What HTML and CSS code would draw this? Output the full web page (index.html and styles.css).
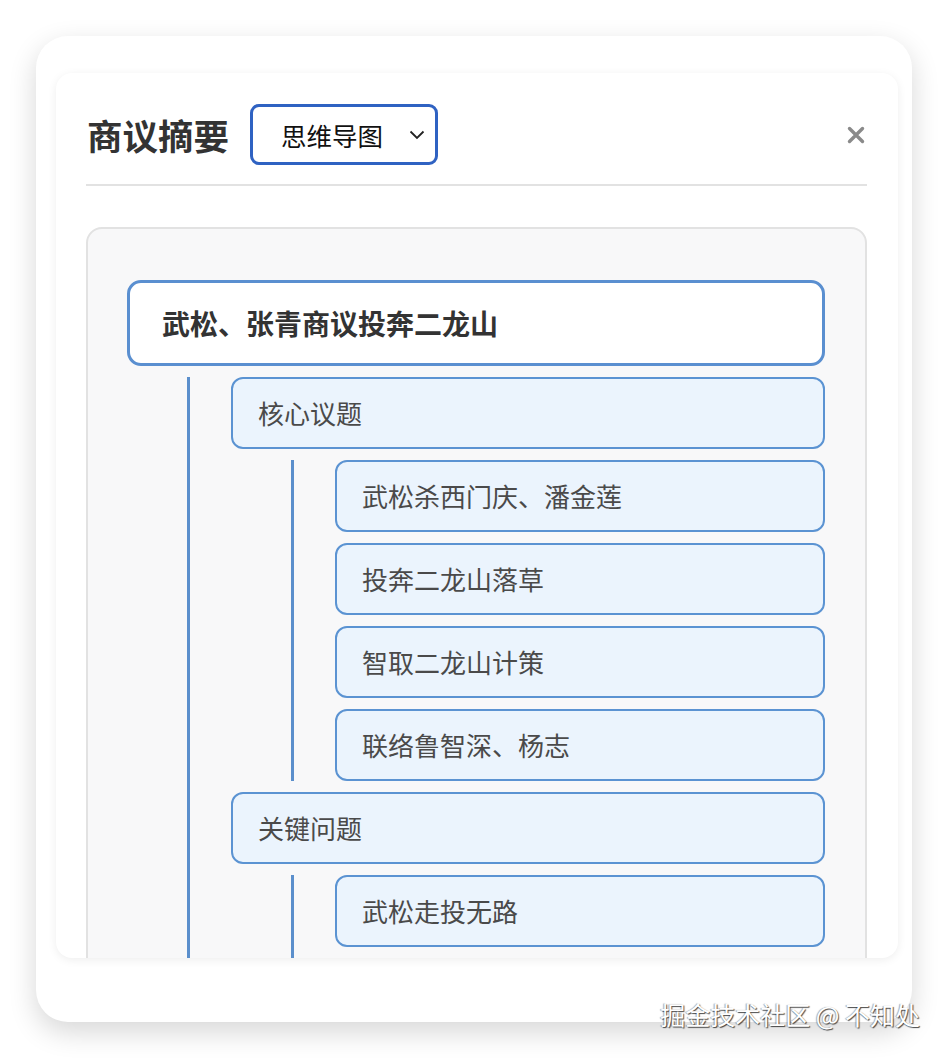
FILE: index.html
```html
<!DOCTYPE html>
<html lang="zh-CN">

<head>
    <meta charset="UTF-8">
    <link rel="stylesheet" href="styles.css">
</head>

<body>
    <div class="frame">
        <div class="panel">
            <div class="panel-header">
                <h2 class="panel-title">商议摘要</h2>
                <div class="view-select">
                    <span>思维导图</span>
                    <svg width="16" height="10" viewBox="0 0 16 10">
                        <path d="M1.5 1.5 L8 8 L14.5 1.5" fill="none" stroke="#222" stroke-width="1.8" />
                    </svg>
                </div>
                <div class="close-btn">
                    <svg width="18" height="18" viewBox="0 0 18 18">
                        <path d="M2.5 2.5 L15.5 15.5 M15.5 2.5 L2.5 15.5" stroke="#8a8a8a" stroke-width="3.4"
                            stroke-linecap="round" />
                    </svg>
                </div>
            </div>

            <div class="mindmap">
                <div class="node root">武松、张青商议投奔二龙山</div>
                <div class="children">
                    <div class="branch">
                        <div class="node">核心议题</div>
                        <div class="children">
                            <div class="node">武松杀西门庆、潘金莲</div>
                            <div class="node">投奔二龙山落草</div>
                            <div class="node">智取二龙山计策</div>
                            <div class="node">联络鲁智深、杨志</div>
                        </div>
                    </div>
                    <div class="branch">
                        <div class="node">关键问题</div>
                        <!-- list continues below the fold -->
                        <div class="children more">
                            <div class="node">武松走投无路</div>
                        </div>
                    </div>
                </div>
            </div>
        </div>
    </div>

    <div class="watermark">掘金技术社区 @ 不知处</div>
</body>

</html>
```

FILE: styles.css
```css
body,
html {
    margin: 0;
    background: #fff;
    font-family: "Noto Sans CJK SC", "Noto Sans", sans-serif;
}

body {
    height: 1058px;
    overflow: hidden;
    position: relative;
}

.frame {
    margin: 36px;
    width: 876px;
    height: 986px;
    box-sizing: border-box;
    padding: 37px 14px 0 20px;
    background: #fff;
    border-radius: 32px;
    box-shadow: 0 10px 28px rgba(0, 0, 0, 0.16);
}

.panel {
    height: 885px;
    overflow: hidden;
    background: #fff;
    border-radius: 16px;
    box-shadow: 0 2px 10px rgba(0, 0, 0, 0.07);
    padding: 0 31px 0 30px;
}

.panel-header {
    display: flex;
    align-items: center;
    padding: 31px 0 19px 0;
    border-bottom: 2px solid #e2e2e2;
}

.panel-title {
    margin: 0 21px 0 1px;
    font-size: 35.5px;
    font-weight: 700;
    color: #333;
    line-height: 40px;
}

.view-select {
    display: flex;
    align-items: center;
    justify-content: space-between;
    width: 188px;
    height: 61px;
    box-sizing: border-box;
    border: 3px solid #2f62c2;
    border-radius: 9px;
    padding: 0 10px 0 28px;
    font-size: 25.5px;
    color: #111;
}

.close-btn {
    margin-left: auto;
    margin-right: 2px;
    display: flex;
}

.mindmap {
    margin-top: 41px;
    background: #f8f8f9;
    border: 2px solid #e2e2e2;
    border-radius: 16px;
    padding: 51px 40px 40px 39px;
}

.node {
    border: 2px solid #5b93d2;
    border-radius: 12px;
    background: #ebf4fd;
    padding: 18px 25px;
    line-height: 32px;
    font-size: 26px;
    color: #4a4a4a;
    margin-bottom: 11px;
}

.node.root {
    border: 3px solid #5a8fd0;
    border-radius: 14px;
    background: #fff;
    padding: 20px 32px;
    line-height: 40px;
    font-size: 28px;
    font-weight: 700;
    color: #333;
}

.children {
    margin-left: 60px;
    padding-left: 41px;
    border-left: 3px solid #5b8fcc;
}

.children.more {
    padding-bottom: 60px;
}

.watermark {
    position: absolute;
    right: 28px;
    top: 996px;
    font-size: 25px;
    color: #fff;
    text-shadow: 1px 1px 1px rgba(0, 0, 0, 0.7), -1px 0 1px rgba(0, 0, 0, 0.35);
}
```
